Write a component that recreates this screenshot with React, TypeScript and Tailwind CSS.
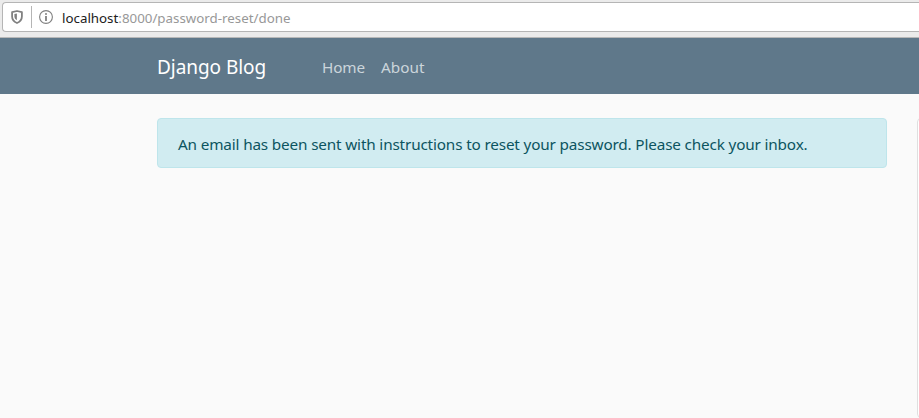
function ShieldIcon() {
  return (
    <svg className="ml-[8px] h-[16px] w-[12px] shrink-0" viewBox="0 0 12 16" fill="none">
      <path d="M6 2 10.9 3.2V7.5C10.9 10.9 8.7 12.9 6 14 3.3 12.9 1.1 10.9 1.1 7.5V3.2Z" stroke="#808080" strokeWidth="1.8" strokeLinejoin="round" />
      <path d="M5.9 4.5V11.3C4.4 10.5 3.4 9.2 3.4 7.3V5.1Z" fill="#808080" />
    </svg>
  );
}

function InfoIcon() {
  return (
    <svg className="ml-[7px] h-[14px] w-[14px] shrink-0" viewBox="0 0 14 14" fill="none">
      <circle cx="7" cy="7" r="6.4" stroke="#808080" strokeWidth="1.1" />
      <circle cx="7" cy="4" r="1" fill="#808080" />
      <path d="M7 6V11" stroke="#808080" strokeWidth="1.8" />
    </svg>
  );
}

export default function App() {
  return (
    <div className="flex h-[418px] w-[919px] flex-col overflow-hidden bg-[#fafafa] font-['Noto_Sans',sans-serif]">
      <div className="h-[38px] shrink-0 border-b border-[#b8b8b8] bg-[#ebebeb] pt-[2px] pl-[2px]">
        <div className="flex h-[30px] items-center rounded-l-[4px] border border-r-0 border-[#b5b5b5] bg-white">
          <ShieldIcon />
          <div className="ml-[8px] h-[22px] w-px shrink-0 bg-[#b5b5b5]" />
          <InfoIcon />
          <div className="ml-[9px] pt-px text-[13.33px] leading-5 whitespace-nowrap text-[#989898]">
            <span className="text-[#202020]">localhost</span>:8000/password-reset/done
          </div>
        </div>
      </div>
      <nav className="flex h-[56px] shrink-0 items-center bg-[#5f788a] pl-[157px] whitespace-nowrap">
        <a className="w-[165px] pt-[2px] text-[19px] leading-[30px] tracking-[-0.05px] text-white">Django Blog</a>
        <a className="w-[59px] pt-[2px] text-[15.3px] leading-6 tracking-[-0.15px] text-[#cbd5db]">Home</a>
        <a className="pt-[2px] text-[15.3px] leading-6 text-[#cbd5db]">About</a>
      </nav>
      <main className="flex min-h-0 flex-1 pt-[24px] pl-[157px]">
        <div className="flex h-[50px] w-[730px] shrink-0 items-center rounded border border-[#bee5eb] bg-[#d1ecf1] pt-[2px] pl-[20px] text-[15.3px] tracking-[-0.16px] whitespace-nowrap text-[#0c5460]">
          An email has been sent with instructions to reset your password. Please check your inbox.
        </div>
        <aside className="ml-[30px] h-[300px] w-[300px] shrink-0 rounded border border-[#dfdfdf] bg-white" />
      </main>
    </div>
  );
}
